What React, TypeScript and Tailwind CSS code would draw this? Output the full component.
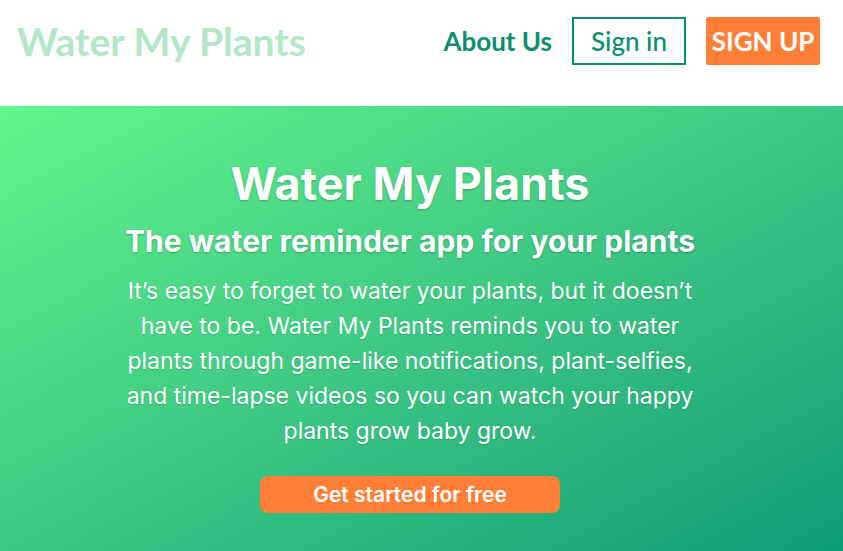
const App = () => {
  return (
    <div className="w-[843px] h-[551px] overflow-hidden bg-white">
      <header className="h-[106px] flex items-start justify-between pl-[17px] pr-[23px] pt-[17px] font-['Lato',sans-serif]">
        <h1 className="text-[39px] leading-[48px] font-bold text-[#b3e7c7]">
          Water My Plants
        </h1>
        <nav className="flex items-center h-[48px]">
          <a className="text-[26px] font-bold text-[#0a8f6f] mr-[20px]">About Us</a>
          <a className="h-[48px] w-[114px] flex items-center justify-center border-2 border-[#0a8f6f] text-[26px] font-medium text-[#0a8f6f]">
            Sign in
          </a>
          <a className="ml-[20px] h-[48px] w-[114px] flex items-center justify-center bg-[#ff7f36] rounded-[2px] text-[26px] font-bold text-white">
            SIGN UP
          </a>
        </nav>
      </header>

      <section className="h-[445px] bg-gradient-to-br from-[#62f68b] to-[#0b9c78] font-['Inter',sans-serif] text-white">
        <div className="flex flex-col items-center pr-[23px] pt-[50px]">
          <h2 className="text-[45px] leading-[56px] font-bold [text-shadow:0_1px_2px_rgba(0,0,0,0.25)]">
            Water My Plants
          </h2>
          <h3 className="mt-[10px] text-[30px] leading-[38px] font-bold [text-shadow:0_1px_2px_rgba(0,0,0,0.25)]">
            The water reminder app for your plants
          </h3>
          <p className="mt-[14px] w-[590px] text-center text-[23px] leading-[35px] font-normal [text-shadow:0_1px_1px_rgba(0,0,0,0.15)]">
            It’s easy to forget to water your plants, but it doesn’t have to be. Water My Plants reminds you to water
            plants through game-like notifications, plant-selfies, and time-lapse videos so you can watch your happy
            plants grow baby grow.
          </p>
          <button className="mt-[27px] w-[300px] h-[37px] rounded-[8px] bg-[#ff7f36] text-[21px] font-semibold text-white">
            Get started for free
          </button>
        </div>
      </section>
    </div>
  );
};

export default App;
